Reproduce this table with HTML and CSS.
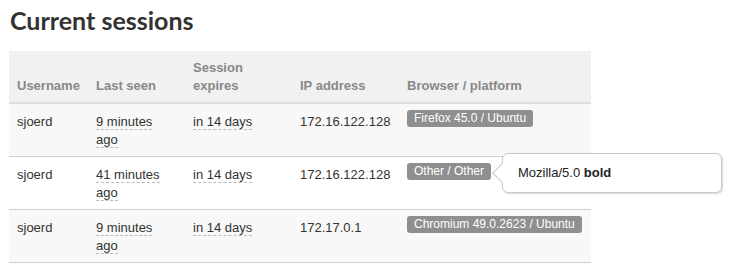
FILE: index.html
```html
<!DOCTYPE html>
<html lang="en">
<head>
    <meta charset="UTF-8">
    <title>Current sessions</title>
    <link rel="stylesheet" href="styles.css">
</head>
<body>

<h1>Current sessions</h1>

<table class="sessions">
    <thead>
        <tr>
            <th class="c-user">Username</th>
            <th class="c-seen">Last seen</th>
            <th class="c-exp">Session expires</th>
            <th class="c-ip">IP address</th>
            <th class="c-ua">Browser / platform</th>
        </tr>
    </thead>
    <tbody>
        <tr>
            <td>sjoerd</td>
            <td><span class="time">9 minutes ago</span></td>
            <td><span class="time">in 14 days</span></td>
            <td>172.16.122.128</td>
            <td><span class="badge">Firefox 45.0 / Ubuntu</span></td>
        </tr>
        <tr>
            <td>sjoerd</td>
            <td><span class="time">41 minutes ago</span></td>
            <td><span class="time">in 14 days</span></td>
            <td>172.16.122.128</td>
            <td>
                <span class="badge has-tip">Other / Other
                    <span class="tip">Mozilla/5.0 <b>bold</b></span>
                </span>
            </td>
        </tr>
        <tr>
            <td>sjoerd</td>
            <td><span class="time">9 minutes ago</span></td>
            <td><span class="time">in 14 days</span></td>
            <td>172.17.0.1</td>
            <td><span class="badge">Chromium 49.0.2623 / Ubuntu</span></td>
        </tr>
    </tbody>
</table>

</body>
</html>
```

FILE: styles.css
```css
body {
    font-family: "Liberation Sans", Arial, sans-serif;
    font-size: 13px;
    color: #333;
    background-color: #fff;
    margin: 0;
    padding: 0 9px;
}

h1 {
    font-family: "Lato", sans-serif;
    font-weight: bold;
    font-size: 25px;
    color: #333;
    margin: 5px 0 16px 1px;
    line-height: 30px;
}

.sessions {
    width: 582px;
    border-collapse: collapse;
    line-height: 18px;
}

.sessions th {
    background-color: #f0f1f0;
    color: #888;
    font-weight: bold;
    text-align: left;
    vertical-align: bottom;
    padding: 8px 8px 7px 8px;
    border-bottom: 2px solid #dcdddc;
}

.sessions td {
    vertical-align: top;
    padding: 9px 8px 7px 8px;
    border-bottom: 1px solid #d0d0d0;
}

.sessions tbody tr:nth-child(odd) td {
    background-color: #f7f8f7;
}

.c-user { width: 63px; }
.c-seen { width: 81px; }
.c-exp { width: 91px; }
.c-ip { width: 91px; }

.time {
    border-bottom: 1px dashed #bbb;
}

.badge {
    display: inline-block;
    background-color: #8e8f8e;
    color: #fff;
    font-size: 12px;
    line-height: 17px;
    padding: 0 7px;
    border-radius: 3px;
    margin-top: -3px;
    vertical-align: top;
}

.has-tip {
    position: relative;
}

.tip {
    position: absolute;
    left: 95px;
    top: -10px;
    width: 203px;
    padding: 10px 0 10px 15px;
    background-color: #fff;
    color: #222;
    font-size: 13px;
    line-height: 18px;
    white-space: nowrap;
    border: 1px solid #c8c8c8;
    border-radius: 6px;
    box-shadow: 1px 1px 2px rgba(0, 0, 0, 0.15);
}

.tip::before {
    content: "";
    position: absolute;
    left: -8px;
    top: 12px;
    width: 13px;
    height: 13px;
    background-color: #fff;
    border-left: 1px solid #c8c8c8;
    border-bottom: 1px solid #c8c8c8;
    transform: rotate(45deg);
}
```
